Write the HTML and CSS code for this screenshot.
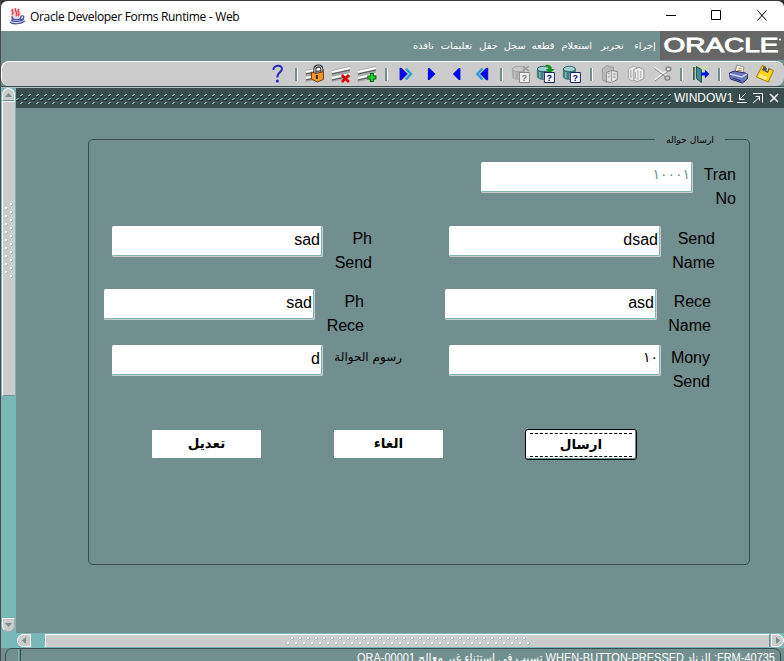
FILE: index.html
```html
<!DOCTYPE html>
<html lang="ar">
<head>
<meta charset="utf-8">
<title>Oracle Developer Forms Runtime - Web</title>
<link rel="stylesheet" href="styles.css">
</head>
<body>
<svg class="defs" width="0" height="0">
  <defs>
    <pattern id="dots-dark" width="8" height="8" patternUnits="userSpaceOnUse">
      <path d="M5 2h2v1h-1v1h-2v-1h1zM1 6h2v1h-1v1h-2v-1h1z" fill="#7ab8b7"/>
      <path d="M6 3h1v1h-1v1h-1v-1h1zM2 7h1v1h-1zM1 0h1v1h-1z" fill="#000"/>
    </pattern>
    <pattern id="dots-column" width="10" height="8" patternUnits="userSpaceOnUse">
      <path d="M6 0h2v2h-2zM1 4h2v2h-2z" fill="#fff"/>
      <path d="M8 1h1v1h-1v1h-1v-1h1zM3 5h1v1h-1v1h-1v-1h1z" fill="#7ab8b7"/>
    </pattern>
    <pattern id="dots-row" width="8" height="10" patternUnits="userSpaceOnUse">
      <path d="M5 1h2v2h-2zM1 6h2v2h-2z" fill="#fff"/>
      <path d="M7 2h1v1h-1v1h-1v-1h1zM3 7h1v1h-1v1h-1v-1h1z" fill="#7ab8b7"/>
    </pattern>
    <g id="form-lines">
      <path d="M1 4L19 0v12L1 16z" fill="#a9a9a9"/>
      <path d="M1 6L19 2M1 12L19 8" stroke="#fff" stroke-width="2"/>
      <path d="M1 8L19 4M1 14L19 10" stroke="#555" stroke-width="1"/>
    </g>
    <g id="database">
      <path d="M0 4v8c2 4 11 4 13 0V4z" fill="#41807f"/>
      <ellipse cx="6.500" cy="4" rx="6" ry="2.700" fill="#9fd0ce" stroke="#28605f"/>
      <path d="M3 7v6M7 8v6" stroke="#9fd0ce"/>
    </g>
  </defs>
</svg>
<div class="window">
  <header class="titlebar">
    <svg class="java" width="17" height="17" viewBox="0 0 17 17" fill="none">
      <path d="M2 1h9l1 7-3 2H4L2 7z" fill="#f8d0d4"/>
      <path d="M4 1c-3 2 2 3-1 6M7 0c-3 3 3 4 0 8M10 1c-3 2 2 4-1 7" stroke="#e04a58" stroke-width="1.500"/>
      <path d="M2 9h10l3 4-3 3H3z" fill="#d8daf0"/>
      <path d="M3 8c0 5 9 5 9 0M12 8c4-1 4 3-1 4M2 12c2 2 10 2 13-1M1 14c3 3 11 2 15-1M3 10l1 2" stroke="#4c4e9c" stroke-width="1.200"/>
    </svg>
    <span class="title">Oracle Developer Forms Runtime - Web</span>
    <svg class="controls" width="112" height="30" viewBox="0 0 112 30" fill="none" stroke="#000">
      <path d="M0 14.500h10M45.500 9.500h9v9h-9z M91.500 9.500l9 10M100.500 9.500l-9 10"/>
    </svg>
  </header>

  <nav class="menubar">
    <div class="menu" dir="rtl">
      <span class="w22">إجراء</span><span class="w24">تحرير</span><span class="w28">استعلام</span><span class="w20">قطعه</span><span class="w18">سجل</span><span class="w15">حقل</span><span class="w30">تعليمات</span><span class="w17">نافذه</span>
    </div>
    <div class="brand">
      <svg width="124" height="29" viewBox="0 0 124 29"><text class="logo" x="3.500" y="21" textLength="115" lengthAdjust="spacingAndGlyphs">ORACLE</text><circle cx="120" cy="8.500" r="1" fill="#fff"/></svg>
    </div>
  </nav>

  <div class="toolbar">
    <svg class="icon" viewBox="0 0 24 22"><path d="M7.500 7C7 2 17 1 16 6.500c-.5 3-5 3-4.500 8" fill="none" stroke="#2a2ac0" stroke-width="2"/><circle cx="11.500" cy="18" r="1.600" fill="#2a2ac0"/></svg>
    <i class="sep"></i>
    <svg class="icon" viewBox="0 0 24 22"><use href="#form-lines" x="1" y="3"/><path d="M11 10V6c0-4 7-4 7 0v4" fill="none" stroke="#333" stroke-width="3"/><path d="M11 10V6c0-4 7-4 7 0v4" fill="none" stroke="#ddd"/><path d="M7.500 9l5 1.500 7-2v8l-6 2.500-6-3z" fill="#ef9a28" stroke="#6d3d08"/><path d="M13 12v4" stroke="#40200a" stroke-width="2"/></svg>
    <svg class="icon" viewBox="0 0 24 22"><use href="#form-lines" x="1" y="3"/><path d="M12 12l7 7M19 12l-7 7" stroke="#e00000" stroke-width="2.600"/></svg>
    <svg class="icon" viewBox="0 0 24 22"><use href="#form-lines" x="1" y="3"/><path d="M16 10v9M11.500 14.500h9" stroke="#055c05" stroke-width="4"/><path d="M16 11v7M12.500 14.500h7" stroke="#1edb2a" stroke-width="2"/></svg>
    <i class="sep"></i>
    <svg class="icon" viewBox="0 0 24 22"><path d="M12 5.500l5 5.500-5 5.500" fill="none" stroke="#28a0d8" stroke-width="2.500"/><path d="M6 5h1.500l6 6-6 6H6z" fill="#0000f0" stroke="#001080" stroke-width=".5"/></svg>
    <svg class="icon" viewBox="0 0 24 22"><path d="M8 5h1.500l6 6-6 6H8z" fill="#0000f0"/></svg>
    <svg class="icon" viewBox="0 0 24 22"><path d="M14.500 5H13l-6 6 6 6h1.500z" fill="#0000f0"/></svg>
    <svg class="icon" viewBox="0 0 24 22"><path d="M11.500 5.500l-5 5.500 5 5.500" fill="none" stroke="#28a0d8" stroke-width="2.500"/><path d="M17 5h-1.500l-6 6 6 6H17z" fill="#0000f0" stroke="#001080" stroke-width=".5"/></svg>
    <i class="sep"></i>
    <svg class="icon" viewBox="0 0 24 22"><g class="faded"><use href="#database" x="2" y="2"/></g><path d="M13 3l6 5M19 3l-6 5" stroke="#999" stroke-width="1.500"/><path d="M9.500 9.500h10v10h-10z" fill="#eee" stroke="#888"/><text class="query dim" x="11.500" y="18">?</text></svg>
    <svg class="icon" viewBox="0 0 24 22"><use href="#database" x="2" y="2"/><path d="M10 2c5-1 7 1 7 4h3l-5 4-4-4h3c0-1-1-2-4-4z" fill="#168f16"/><path d="M9.500 9.500h10v10h-10z" fill="#fff" stroke="#10246c"/><text class="query" x="11.500" y="18">?</text></svg>
    <svg class="icon" viewBox="0 0 24 22"><use href="#database" x="2" y="2"/><path d="M9.500 9.500h10v10h-10z" fill="#fff" stroke="#10246c"/><text class="query" x="11.500" y="18">?</text></svg>
    <i class="sep"></i>
    <svg class="icon" viewBox="0 0 24 22"><path d="M3.500 6l3-2 2-2 2 2h4v12l-7 3-4-2z" fill="#bbb" stroke="#999"/><path d="M7.500 9.500l5-2 6 1v8l-6 3-5-1z" fill="#e4e4e4" stroke="#888"/><path d="M12.500 8v10M9 11l2-1M9 14l2-1M14 11h3M14 14h3" stroke="#999"/></svg>
    <svg class="icon" viewBox="0 0 24 22"><path d="M3.500 6l5-3 5 2v10l-6 3-4-2z" fill="#e4e4e4" stroke="#aaa"/><path d="M9 6.500l5-2 5 2v9l-6 3-4-1z" fill="#eee" stroke="#999"/><path d="M13 7v10M10.500 9v7M16 8v7M6 7v8" stroke="#aaa"/></svg>
    <svg class="icon" viewBox="0 0 24 22"><path d="M3 4l13 9M4 17L18 6" stroke="#eee" stroke-width="2"/><path d="M3 5l12 9M4 18L19 7" stroke="#888"/><ellipse cx="17.500" cy="6" rx="2.500" ry="2" fill="none" stroke="#888" stroke-width="1.500"/><ellipse cx="16.500" cy="15" rx="2.500" ry="2" fill="none" stroke="#888" stroke-width="1.500"/></svg>
    <i class="sep"></i>
    <svg class="icon" viewBox="0 0 24 22"><path d="M3 3h15v13H3z" fill="#d8d8b6"/><path d="M7.500 3.500l5 3v13l-5-4z" fill="#3c9090" stroke="#174e4e"/><path d="M5 4v13" stroke="#174e4e" stroke-width="1.500"/><path d="M12 9.500h4v-3l4.500 4.500-4.500 4.500v-3h-4z" fill="#0712dc"/></svg>
    <i class="sep"></i>
    <svg class="icon" viewBox="0 0 24 22"><path d="M8 9l2-7 7 2-1 6z" fill="#fff" stroke="#888"/><path d="M11 5l4 1M10 7l5 1" stroke="#b58730"/><path d="M2.500 10l5-2 11 2 2 1v5l-5 4-12-4z" fill="#6b75bd" stroke="#252c68"/><path d="M3 11l12 3 5-3" fill="none" stroke="#c8cef0" stroke-width="1.500"/><path d="M6 15l8 3" stroke="#252c68"/><path d="M17 15h2" stroke="#1edb2a"/></svg>
    <svg class="icon" viewBox="0 0 24 22"><path d="M9.500 2.500l11 5-5 11.500-12-5z" fill="#ffd51c" stroke="#a87c00"/><path d="M11 3l6 3-2 4-6-3z" fill="#555"/><path d="M13 4l2 1-1 3" stroke="#fff" fill="none"/><path d="M7 11l7 3-1 3-7-3z" fill="#fff093"/></svg>
  </div>

  <div class="workspace">
    <div class="vscroll">
      <div class="arrow up"><svg width="7" height="4"><path d="M0 4L3.500 0 7 4z" fill="#718f8e"/></svg></div>
      <div class="thumb"><svg width="10" height="76"><rect width="10" height="76" fill="url(#dots-column)"/></svg></div>
      <div class="track"></div>
      <div class="arrow down"><svg width="7" height="4"><path d="M0 0L3.500 4 7 0z" fill="#718f8e"/></svg></div>
    </div>
    <main class="canvas">
      <div class="window-title">
        <svg class="grip" height="12"><rect width="100%" height="12" fill="url(#dots-dark)"/></svg>
        <span>WINDOW1</span>
        <svg width="46" height="20" viewBox="0 0 46 20" fill="none" stroke="#fff"><path d="M3 14.500h10M5.500 6v5.500h5M6 11l6-6M19 5.500h9.500v9M19 15l7-6M21.500 8.500h4v4"/><path d="M36 6l8 8M44 6l-8 8" stroke-width="1.500"/></svg>
      </div>
      <section class="group">
        <div class="legend" dir="rtl">ارسال حواله</div>
        <div class="row first">
          <div class="field muted">١٠٠٠١</div><label class="wide-label">Tran<br>No</label>
        </div>
        <div class="row second">
          <div class="field short">sad</div><label class="near">Ph<br>Send</label>
          <div class="field">dsad</div><label>Send<br>Name</label>
        </div>
        <div class="row third">
          <div class="field short">sad</div><label class="near">Ph<br>Rece</label>
          <div class="field">asd</div><label>Rece<br>Name</label>
        </div>
        <div class="row fourth">
          <div class="field short">d</div><label class="arabic" dir="rtl">رسوم الحوالة</label>
          <div class="field amount">١٠</div><label class="last">Mony<br>Send</label>
        </div>
        <div class="buttons">
          <button>تعديل</button>
          <button>الغاء</button>
          <button class="focused"><span>ارسال</span></button>
        </div>
      </section>
    </main>
  </div>

  <div class="hscroll">
    <div class="arrow left"><svg width="4" height="7"><path d="M4 0L0 3.500 4 7z" fill="#718f8e"/></svg></div>
    <div class="hthumb"><svg width="244" height="10"><rect width="244" height="10" fill="url(#dots-row)"/></svg></div>
    <div class="arrow right"><svg width="4" height="7"><path d="M0 0L4 3.500 0 7z" fill="#718f8e"/></svg></div>
  </div>
  <footer class="status"><i class="tick"></i>
    <svg width="440" height="13"><text x="426" y="13" direction="rtl" textLength="418" lengthAdjust="spacingAndGlyphs">FRM-40735: الزناد WHEN-BUTTON-PRESSED تسبب في استثناء غير معالج ORA-00001</text></svg>
  </footer>
</div>
</body>
</html>
```
FILE: styles.css
```css
* { box-sizing: border-box; }
body {
  margin: 0;
  background: #222;
  font-family: "Liberation Sans", "DejaVu Sans", sans-serif;
  color: #000;
}
svg { display: block; }
.defs { position: absolute; }
.window {
  width: 784px;
  height: 661px;
  overflow: hidden;
  display: flex;
  flex-direction: column;
  border-top: 1px solid #3a3a3a;
  border-left: 1px solid #4a4a4a;
  background: #718f8e;
}
.titlebar {
  height: 30px;
  flex: none;
  display: flex;
  align-items: center;
  background: #fff;
  border-radius: 6px 6px 0 0;
  box-shadow: 0 -4px 0 #222;
  padding-left: 8px;
}
.title {
  margin-left: 4px;
  font: 12px "Open Sans", "Noto Sans", sans-serif;
  letter-spacing: -.32px;
  white-space: nowrap;
}
.controls { margin-left: auto; margin-right: 6px; }
.menubar { height: 30px; flex: none; display: flex; justify-content: flex-end; }
.menu {
  display: flex;
  gap: 9.6px;
  padding-right: 4px;
  color: #fff;
  font: 9.8px/30px "DejaVu Sans", sans-serif;
}
.menu span { display: flex; justify-content: center; white-space: nowrap; }
.w22 { width: 22px; } .w24 { width: 24px; } .w28 { width: 28px; } .w20 { width: 20px; }
.w18 { width: 18px; } .w15 { width: 15px; } .w30 { width: 30px; } .w17 { width: 17px; }
.brand { width: 124px; height: 29px; background: #666; }
.logo { font-size: 20px; fill: #fff; stroke: #fff; stroke-width: .9px; }
.toolbar {
  height: 25px;
  flex: none;
  display: flex;
  align-items: center;
  padding-left: 263px;
  background: #ccc;
  border-top: 1px solid #fff;
  border-left: 1px solid #fff;
  border-radius: 8px;
}
.icon { width: 25.75px; height: 22px; flex: none; }
.sep { width: 12.5px; height: 13px; flex: none; display: flex; padding-left: 4px; }
.sep::before { content: ""; width: 2px; background: #718f8e; border-right: 1px solid #fff; }
.faded { opacity: .35; filter: grayscale(1); }
.query { font: bold 9px "Liberation Sans", sans-serif; fill: #000080; }
.dim { fill: #777; }
.workspace {
  height: 547px;
  flex: none;
  display: flex;
  border-top: 1px solid #384e4e;
  box-shadow: inset 0 1px 0 #b8c4c3;
}
.vscroll {
  width: 15px;
  margin-top: 1px;
  padding: 0 1px 1px;
  background: #7ab8b7;
  display: flex;
  flex-direction: column;
}
.arrow {
  display: flex;
  align-items: center;
  justify-content: center;
  background: #ccc;
  border: 1px solid #fff;
  flex: none;
}
.up { height: 13px; border-radius: 7px 7px 0 0; border-bottom-color: #718f8e; }
.down { height: 14px; border-radius: 0 0 7px 7px; border-right-color: #aaa; border-bottom-color: #aaa; }
.thumb {
  height: 295px;
  display: flex;
  align-items: flex-start;
  justify-content: center;
  padding-top: 101px;
  background: #ccc;
  border-top: 1px solid #fff;
  border-left: 1px solid #fff;
  border-bottom: 1px solid #718f8e;
}
.track { flex: 1; }
.canvas { flex: 1; }
.window-title {
  height: 20px;
  margin-top: 1px;
  display: flex;
  align-items: center;
  background: #384e4e;
  color: #fff;
  font-size: 12px;
}
.window-title span { margin-left: 2px; width: 60px; }
.grip { width: 656px; flex: none; }
.group {
  position: relative;
  width: 662px;
  height: 426px;
  margin: 31px 0 0 72px;
  border: 1px solid #384e4e;
  border-radius: 5px;
  padding-top: 22px;
}
.legend {
  position: absolute;
  top: -9px;
  left: 566px;
  width: 70px;
  height: 18px;
  text-align: center;
  background: #718f8e;
  font: 9.2px/18px "DejaVu Sans", sans-serif;
  white-space: nowrap;
}
.row { display: flex; align-items: flex-start; }
.field {
  width: 212px;
  height: 31px;
  flex: none;
  padding-right: 2px;
  background: #fff;
  border-right: 1px solid #ccc;
  border-bottom: 1px solid #ccc;
  box-shadow: inset -1px -1px 0 #7ab8b7;
  border-radius: 2px;
  font-size: 16px;
  line-height: 28px;
  text-align: right;
}
.short { width: 211px; margin-right: 1px; }
.muted { color: #718f8e; }
.muted, .amount { font: 14px/25px "DejaVu Sans", sans-serif; }
label { width: 54px; padding-top: 1px; font-size: 16px; line-height: 24px; text-align: right; }
.near { width: 48px; margin-right: 77px; }
.first { height: 64px; padding-left: 392px; }
.wide-label { width: 43px; }
.second { height: 63px; padding-left: 23px; }
.third { height: 56px; padding-left: 15px; }
.third .near { margin-right: 81px; }
.fourth { height: 84px; padding-left: 23px; }
.arabic { width: 78px; margin-right: 47px; padding-top: 0; font: 12px/24px "DejaVu Sans", sans-serif; white-space: nowrap; }
.last { width: 49px; }
.buttons { display: flex; align-items: flex-start; padding: 1px 0 0 63px; }
button {
  width: 109px;
  height: 28px;
  margin: 0 73px 0 0;
  padding: 0 0 3px;
  border: 0;
  border-radius: 1px;
  background: #fff;
  color: #000;
  font: bold 13.5px "DejaVu Sans", sans-serif;
}
.focused {
  width: 112px;
  height: 31px;
  margin: -1px 0 0 9px;
  border: 1px solid #000;
  border-radius: 3px;
  padding: 2px 4px;
  box-shadow: inset -1px -1px 0 #718f8e;
}
.focused span {
  display: block;
  height: 24px;
  line-height: 20px;
  border-top: 1px dashed #000;
  border-bottom: 1px dashed #000;
}
.hscroll {
  height: 15px;
  flex: none;
  display: flex;
  padding: 1px 0 1px 16px;
  background: #7ab8b7;
}
.left { width: 14px; border-radius: 7px 0 0 7px; }
.right { width: 13px; border-radius: 0 7px 7px 0; }
.hthumb {
  width: 725px;
  margin: 0 1px 0 14px;
  display: flex;
  align-items: center;
  justify-content: center;
  background: #ccc;
  border-top: 1px solid #fff;
  border-left: 1px solid #fff;
  border-right: 1px solid #718f8e;
}
.status {
  flex: none;
  height: 40px;
  margin: 0 3px 0 4px;
  display: flex;
  border: 1px solid #384e4e;
  border-radius: 7px;
  font: 12px "Liberation Sans", "DejaVu Sans", sans-serif;
}
.status text { fill: #fff; }
.status svg { margin-left: 328px; }
.tick { width: 3px; margin-left: 12px; border-left: 1px solid #7ab8b7; border-right: 1px solid #384e4e; }
```
